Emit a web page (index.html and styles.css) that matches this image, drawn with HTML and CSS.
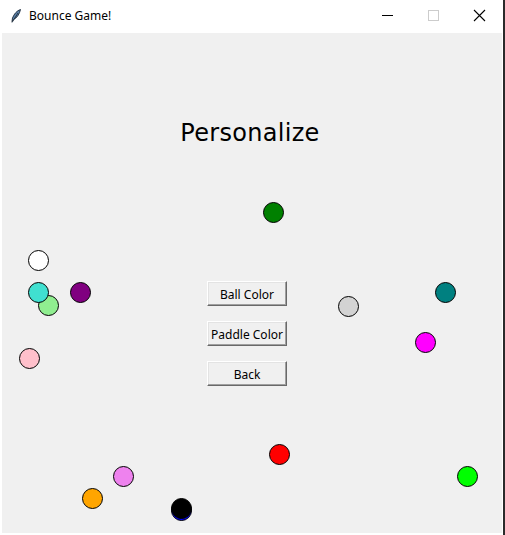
FILE: index.html
```html
<!DOCTYPE html>
<html>
<head>
<meta charset="utf-8">
<link rel="stylesheet" href="styles.css">
</head>
<body>
<div class="window">
  <div class="titlebar">
    <svg class="app-icon" width="16" height="16" viewBox="0 0 16 16">
      <path d="M12.5 1.5 C9 2.5 6 6 4.5 10 L4 13.5 L5.5 11.5 C9 10 11.5 6 12.5 1.5 Z" fill="#5b7fa6" stroke="#1d2b3a" stroke-width="0.9"/>
      <path d="M4 14.5 L10 5" stroke="#1d2b3a" stroke-width="0.9"/>
    </svg>
    <span class="title">Bounce Game!</span>
    <div class="controls">
      <svg class="ctl" width="46" height="32" viewBox="0 0 46 32"><path d="M18 15.5 H29" stroke="#000" stroke-width="1"/></svg>
      <svg class="ctl" width="46" height="32" viewBox="0 0 46 32"><rect x="18.5" y="10.5" width="10" height="10" fill="none" stroke="#cccccc" stroke-width="1"/></svg>
      <svg class="ctl" width="46" height="32" viewBox="0 0 46 32"><path d="M18 10 L29 21 M29 10 L18 21" stroke="#000" stroke-width="1.1"/></svg>
    </div>
  </div>
  <div class="canvas">
    <div class="ball c-green" style="left:261px;top:169px"></div>
    <div class="ball c-white" style="left:26px;top:217px"></div>
    <div class="ball c-lightgreen" style="left:36px;top:262px"></div>
    <div class="ball c-turquoise" style="left:26px;top:249px"></div>
    <div class="ball c-purple" style="left:68px;top:249px"></div>
    <div class="ball c-pink" style="left:17px;top:315px"></div>
    <div class="ball c-lightgray" style="left:336px;top:263px"></div>
    <div class="ball c-teal" style="left:433px;top:249px"></div>
    <div class="ball c-magenta" style="left:413px;top:299px"></div>
    <div class="ball c-red" style="left:267px;top:411px"></div>
    <div class="ball c-lime" style="left:455px;top:433px"></div>
    <div class="ball c-violet" style="left:111px;top:433px"></div>
    <div class="ball c-orange" style="left:80px;top:455px"></div>
    <div class="ball c-blue" style="left:169px;top:467px"></div>
    <div class="ball c-black" style="left:169px;top:465px"></div>

    <div class="menu">
      <h1 class="heading">Personalize</h1>
      <div class="buttons">
        <button class="tk-btn">Ball Color</button>
        <button class="tk-btn">Paddle Color</button>
        <button class="tk-btn">Back</button>
      </div>
    </div>
  </div>
</div>
</body>
</html>
```
FILE: styles.css
```css
html, body {
  margin: 0;
  padding: 0;
  background: #ffffff;
}
.window {
  width: 503px;
  height: 535px;
  border-right: 2px solid #2b2b2b;
  background: #ffffff;
  overflow: hidden;
}
.titlebar {
  height: 33px;
  display: flex;
  align-items: center;
  background: #ffffff;
  font-family: "Noto Sans", "Liberation Sans", sans-serif;
}
.app-icon {
  margin-left: 8px;
  margin-top: -1px;
}
.title {
  margin-left: 5px;
  font-size: 12px;
  color: #000;
  margin-top: -2px;
}
.controls {
  margin-left: auto;
  display: flex;
  margin-right: 1px;
}
.ctl {
  display: block;
  margin-top: -1px;
}
.canvas {
  position: relative;
  margin-left: 2px;
  width: 500px;
  height: 500px;
  background: #f0f0f0;
}
.menu {
  display: flex;
  flex-direction: column;
  align-items: center;
  padding-top: 82px;
  position: relative;
}
.heading {
  margin: 0 4px 0 0;
  font-family: "DejaVu Sans", sans-serif;
  font-weight: normal;
  font-size: 24px;
  line-height: 36px;
  color: #000;
  letter-spacing: 0.3px;
}
.buttons {
  margin-top: 130px;
  margin-left: -10px;
  display: flex;
  flex-direction: column;
  gap: 15px;
}
.tk-btn {
  width: 80px;
  height: 25px;
  box-sizing: border-box;
  padding: 1px 0 0 0;
  margin: 0;
  background: #f0f0f0;
  border: 1px solid;
  border-color: #ffffff #696969 #696969 #ffffff;
  box-shadow: inset -1px -1px 0 #a0a0a0, inset 1px 1px 0 #e3e3e3;
  font-family: "Noto Sans", "Liberation Sans", sans-serif;
  font-size: 12px;
  color: #000;
  line-height: 21px;
}
.ball {
  position: absolute;
  width: 21px;
  height: 21px;
  box-sizing: border-box;
  border: 1px solid #000;
  border-radius: 50%;
}
.c-green { background: #008000; }
.c-white { background: #ffffff; }
.c-lightgreen { background: #90ee90; }
.c-turquoise { background: #40e0d0; }
.c-purple { background: #800080; }
.c-pink { background: #ffc0cb; }
.c-lightgray { background: #d3d3d3; }
.c-teal { background: #008080; }
.c-magenta { background: #ff00ff; }
.c-red { background: #ff0000; }
.c-lime { background: #00ff00; }
.c-violet { background: #ee82ee; }
.c-orange { background: #ffa500; }
.c-blue { background: #0000ff; }
.c-black { background: #000000; }
```
